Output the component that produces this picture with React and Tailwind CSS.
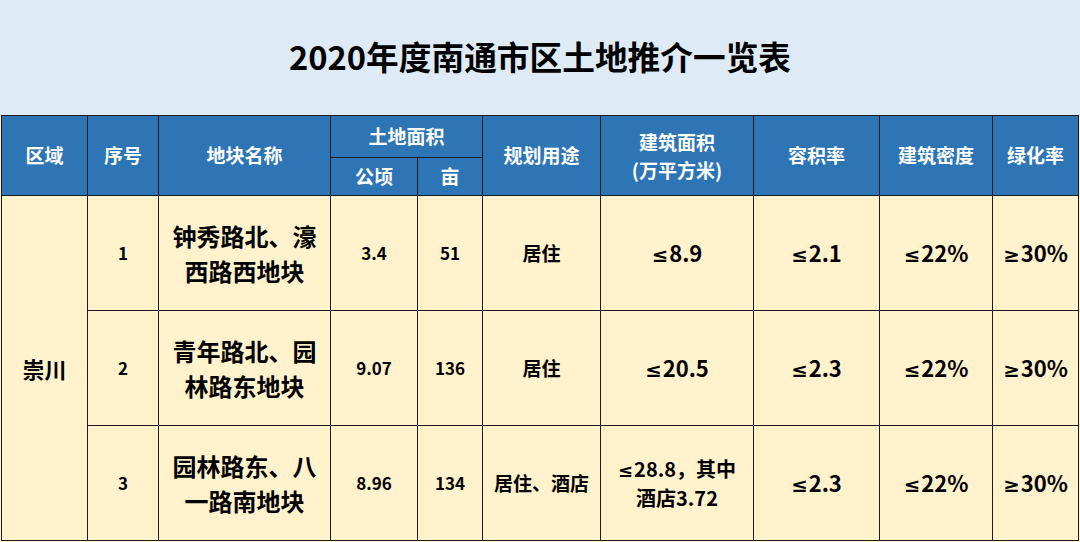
const rows = [
  { no: '1', name: ['钟秀路北、濠', '西路西地块'], ha: '3.4', mu: '51', use: '居住', area: ['≤8.9'], far: '≤2.1', density: '≤22%', green: '≥30%' },
  { no: '2', name: ['青年路北、园', '林路东地块'], ha: '9.07', mu: '136', use: '居住', area: ['≤20.5'], far: '≤2.3', density: '≤22%', green: '≥30%' },
  { no: '3', name: ['园林路东、八', '一路南地块'], ha: '8.96', mu: '134', use: '居住、酒店', area: ['≤28.8，其中', '酒店3.72'], far: '≤2.3', density: '≤22%', green: '≥30%' },
]

const cols = [86, 71, 172, 87, 65, 118, 153, 126, 113, 86]

const th = 'border-[1.5px] border-[#1c1c1c] bg-[#2e75b6] text-white font-bold text-[19px] text-center align-middle p-0'
const td = 'border-[1.5px] border-[#1c1c1c] bg-[#fff2cc] text-black font-bold text-center align-middle p-0'

// the CJK font draws ≤ / ≥ slanted; take them from a Latin face
function Val({ text }) {
  const m = text.match(/^([≤≥])(.*)$/)
  if (!m) return text
  return (
    <>
      <span className="font-['DejaVu_Sans',sans-serif] text-[0.9em] mr-[1px]">{m[1]}</span>
      {m[2]}
    </>
  )
}

export default function App() {
  return (
    <div className="w-[1080px] h-[542px] overflow-hidden bg-[#fff2cc] font-['Noto_Sans_CJK_SC',sans-serif]">
      {/* Title band */}
      <div className="h-[115px] bg-[#deebf7] flex items-center justify-center pb-[2px]">
        <h1 className="text-[32.7px] font-bold text-black leading-none">2020年度南通市区土地推介一览表</h1>
      </div>

      <table className="table-fixed border-collapse w-[1078px] ml-[1px]">
        <colgroup>
          {cols.map((w, i) => <col key={i} style={{ width: w }} />)}
        </colgroup>
        <thead>
          <tr className="h-[42px]">
            <th rowSpan={2} className={th}>区域</th>
            <th rowSpan={2} className={th}>序号</th>
            <th rowSpan={2} className={th}>地块名称</th>
            <th colSpan={2} className={th}>土地面积</th>
            <th rowSpan={2} className={th}>规划用途</th>
            <th rowSpan={2} className={th + ' leading-[28px]'}>建筑面积<br />(万平方米)</th>
            <th rowSpan={2} className={th}>容积率</th>
            <th rowSpan={2} className={th}>建筑密度</th>
            <th rowSpan={2} className={th}>绿化率</th>
          </tr>
          <tr className="h-[38px]">
            <th className={th}>公顷</th>
            <th className={th}>亩</th>
          </tr>
        </thead>
        <tbody>
          {rows.map((r, i) => (
            <tr key={r.no} className="h-[115px]">
              {i === 0 && (
                <td rowSpan={3} className={td + ' text-[22px]'}>崇川</td>
              )}
              <td className={td + ' text-[17px]'}>{r.no}</td>
              <td className={td + ' text-[24px] leading-[35px]'}>
                {r.name[0]}<br />{r.name[1]}
              </td>
              <td className={td + ' text-[17px]'}>{r.ha}</td>
              <td className={td + ' text-[17px]'}>{r.mu}</td>
              <td className={td + ' text-[19px] whitespace-nowrap'}>{r.use}</td>
              <td className={td + (r.area.length > 1 ? ' text-[20px] leading-[27px] whitespace-nowrap' : ' text-[22px]')}>
                {r.area.map((l, k) => (
                  <div key={k}><Val text={l} /></div>
                ))}
              </td>
              <td className={td + ' text-[22px]'}><Val text={r.far} /></td>
              <td className={td + ' text-[22px]'}><Val text={r.density} /></td>
              <td className={td + ' text-[22px]'}><Val text={r.green} /></td>
            </tr>
          ))}
        </tbody>
      </table>
    </div>
  )
}
